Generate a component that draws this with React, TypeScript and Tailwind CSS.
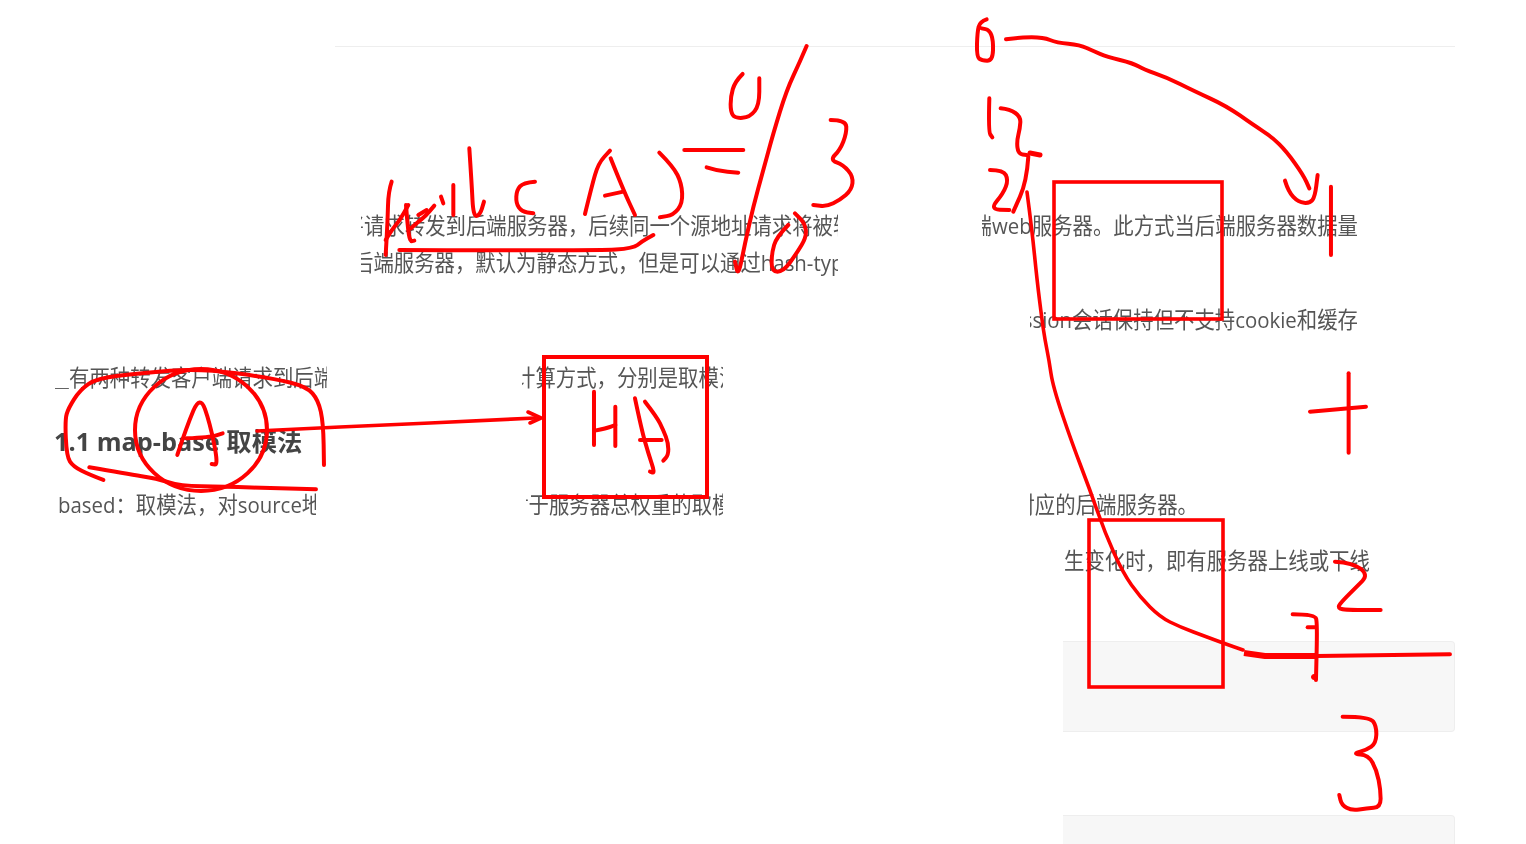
import React from 'react';

const font = { fontFamily: '"Open Sans", "Noto Sans CJK SC", sans-serif' };

// strokes in the 3x coordinates of each crop, origin given by the group
const heilStrokes = [
  'M50 125 L40 155 L38 240 L32 345',
  'M32 300 L50 270 L75 240 L100 195',
  'M93 195 L98 260 L105 305 L118 302',
  'M108 265 L130 245 L150 230 L178 197',
  'M130 225 L155 210',
  'M198 170 L205 190',
  'M235 135 L235 225',
  'M283 25 L290 130 L295 230 L315 225 L327 185',
];

const topLeft = [
  'M585 455 L550 458 L530 480 L528 520 L545 545 L580 550',
  'M735 552 L755 470 L775 400 L810 362',
  'M812 385 L850 480 L885 555',
  'M795 497 L850 485',
  'M958 368 L1000 410 L1025 460 L1028 520 L1000 555 L960 562',
  'M178 660 L775 662 L880 655 L905 635 L940 615',
  'M1033 360 L1210 360',
  'M1100 412 L1130 422 L1195 428',
  'M1208 132 L1185 155 L1172 200 L1172 245 L1185 265 L1230 262 L1258 225 L1258 145',
  'M1400 48 L1380 95 L1340 180 L1300 310 L1270 420 L1240 530 L1215 640 L1195 740 L1185 695',
  'M1472 270 L1518 270 L1520 310 L1500 360 L1470 390 L1510 405 L1540 440 L1535 480 L1500 510 L1460 530 L1420 525',
  'M1345 585 L1310 620 L1295 670 L1295 725 L1330 725 L1370 670 L1400 620 L1395 580 L1365 550',
];

const sixStroke = ['M50 28 L30 35 L22 65 L20 140 L35 152 L68 152 L70 90 L58 60 L35 55'];

const topRight = [
  'M138 118 L180 112 L250 112 L290 128 L360 135 L400 153 L440 170 L520 190 L550 208 L620 232 L700 272 L800 318 L880 375 L935 410 L980 455 L1030 525 L1048 565',
  'M975 542 L985 575 L1015 607 L1050 610 L1065 590 L1073 525',
  'M1113 560 L1113 765',
  'M88 295 L85 395 L97 412',
  'M122 325 L150 328 L182 350 L180 385 L170 425 L175 462 L200 465',
  'M205 470 L200 545 L160 635',
  'M90 510 L130 510 L145 540 L130 580 L90 628 L148 630',
];

const midLeft = [
  'M190 390 L150 375 L100 350 L80 320 L75 210 L85 175 L120 120 L170 85 L300 70 L480 55 L700 85 L800 110 L835 150 L850 220 L852 345',
  'M148 352 L260 372 L350 385 L420 408 L550 410 L720 415 L828 418',
  'M412 315 L440 230 L480 135 L510 220 L535 345 L515 342',
  'M440 265 L510 262 L548 250',
];

const midCenter = [
  'M282 155 L282 315',
  'M346 200 L346 318',
  'M285 272 L320 265 L346 255',
  'M405 175 L425 270 L445 340 L465 400 L450 395',
  'M435 185 L470 230 L490 270 L505 310 L505 345 L490 362',
  'M420 300 L485 300',
];

const lowRight = [
  'M848 763 L915 763 L922 790 L918 960',
  'M893 802 L915 802',
  'M920 888 L1320 883',
  'M975 605 L1030 608 L1075 645 L1040 680 L1000 720 L982 742 L1000 750 L1112 750',
  'M1016 40 L1016 278',
  'M900 155 L1068 140',
];

const bottomRight = [
  'M908 290 L990 290 L1010 320 L1008 370 L980 390 L937 402 L985 405 L1010 450 L1022 510 L1022 562 L980 565 L935 572 L905 555 L898 525',
];

// rounds the corners of a stroke so it reads as drawn by hand
function smooth(d: string) {
  const pts = d
    .replace('M', '')
    .split(' L')
    .map((p) => p.trim().split(' ').map(Number));
  if (pts.length < 3) return d;
  let out = `M${pts[0][0]} ${pts[0][1]}`;
  for (let i = 1; i < pts.length - 1; i++) {
    const mx = (pts[i][0] + pts[i + 1][0]) / 2;
    const my = (pts[i][1] + pts[i + 1][1]) / 2;
    out += ` Q${pts[i][0]} ${pts[i][1]} ${mx} ${my}`;
  }
  const last = pts[pts.length - 1];
  return `${out} L${last[0]} ${last[1]}`;
}

function Strokes({ x, y, paths }: { x: number; y: number; paths: string[] }) {
  return (
    <g transform={`translate(${x} ${y}) scale(0.3333)`} strokeWidth={12}>
      {paths.map((d) => (
        <path key={d} d={smooth(d)} />
      ))}
    </g>
  );
}

function Ink() {
  return (
    <svg
      className="absolute left-0 top-0"
      width={1526}
      height={844}
      viewBox="0 0 1526 844"
      fill="none"
      stroke="#ff0000"
      strokeLinecap="round"
      strokeLinejoin="round"
    >
      <Strokes x={375} y={140} paths={heilStrokes} />
      <Strokes x={340} y={30} paths={topLeft} />
      <Strokes x={970} y={10} paths={sixStroke} />
      <Strokes x={960} y={0} paths={topRight} />
      <Strokes x={40} y={350} paths={midLeft} />
      <Strokes x={500} y={340} paths={midCenter} />
      <Strokes x={1010} y={360} paths={lowRight} />
      <Strokes x={1040} y={620} paths={bottomRight} />

      <ellipse cx={201} cy={430} rx={66} ry={61} strokeWidth={4} />
      <rect x={1054} y={182} width={168} height={137} strokeWidth={3.6} strokeLinejoin="miter" />
      <rect x={1089} y={520} width={134} height={167} strokeWidth={3.6} strokeLinejoin="miter" />
      <rect x={544} y={357} width={163} height={140} strokeWidth={4} strokeLinejoin="miter" />

      {/* long curve from the 2 down to the thick stroke */}
      <path
        d={smooth(
          'M1027 192 L1032 230 L1037 280 L1042 320 L1045 340 L1049 360 L1053 387 L1072 443 L1090 490 L1105 533 L1123 573 L1140 597 L1160 617 L1180 627 L1207 637 L1223 643 L1243 650',
        )}
        strokeWidth={3.6}
      />
      <path d="M1244 653 L1265 656 L1316 656" strokeWidth={6} strokeLinecap="butt" />
      <circle cx={1314} cy={677} r={2.5} fill="#ff0000" strokeWidth={1} />
      <path d="M1030 153 L1040 155" strokeWidth={5} />

      {/* arrow */}
      <path d="M257 431 L340 427 L430 423 L535 418" strokeWidth={3.6} />
      <path d="M528 412 L541 418 L530 423" strokeWidth={3.6} />
    </svg>
  );
}

function Line({ className = '', children }: { className?: string; children: React.ReactNode }) {
  return (
    <div className={`flex h-9 items-center overflow-hidden whitespace-nowrap ${className}`}>
      <span className="origin-center scale-y-110">{children}</span>
    </div>
  );
}

export default function App() {
  return (
    <div
      className="relative flex h-[844px] w-[1526px] flex-col overflow-hidden bg-white pt-[46px] text-[20.4px] text-[#555555] blur-[0.35px]"
      style={font}
    >
      <div className="ml-[335px] h-px w-[1120px] shrink-0 bg-[#eeeeee]" />

      {/* upper text lines */}
      <div className="mt-[160px] flex shrink-0">
        <div className="ml-[361px] flex w-[477px] flex-col gap-px">
          <Line><span className="ml-[-17.4px]">将请求转发到后端服务器，后续同一个源地址请求将被转</span></Line>
          <Line><span className="ml-[-8px]">后端服务器，默认为静态方式，但是可以通过hash-type</span></Line>
        </div>
        <div className="ml-[144px] flex w-[376px] flex-col items-end gap-[58px]">
          <Line className="w-[376px] justify-end">后端web服务器。此方式当后端服务器数据量</Line>
          <Line className="w-[328px] justify-end">session会话保持但不支持cookie和缓存</Line>
        </div>
      </div>

      {/* middle columns */}
      <div className="mt-[22px] flex shrink-0">
        <div className="ml-[54px] flex w-[273px] flex-col">
          <Line className="ml-px"><span className="ml-[-6.4px]">＿有两种转发客户端请求到后端</span></Line>
          <div className="mt-[27px] flex h-10 w-[260px] items-center overflow-hidden whitespace-nowrap text-[25.3px] font-bold text-[#444444]">
            1.1 map-base 取模法
          </div>
          <Line className="ml-1 mt-[24px] w-[258px]">based：取模法，对source地址</Line>
        </div>
        <div className="ml-[195px] flex flex-col gap-[91px]">
          <Line className="w-[201px]"><span className="ml-[-7px]">计算方式，分别是取模法</span></Line>
          <Line className="ml-1 w-[197px]"><span className="ml-[-17.8px]">对于服务器总权重的取模</span></Line>
        </div>
        <div className="ml-[307px] flex flex-col gap-[20px] pt-[127px]">
          <Line className="w-[168px] justify-end">对应的后端服务器。</Line>
          <Line className="ml-[34px] w-[308px]">生变化时，即有服务器上线或下线，</Line>
        </div>
      </div>

      {/* gray code blocks */}
      <div className="ml-[1063px] mt-[63px] h-[91px] w-[392px] shrink-0 rounded-r border border-l-0 border-[#eeeeee] bg-[#f7f7f7]" />
      <div className="ml-[1063px] mt-[83px] h-[60px] w-[392px] shrink-0 rounded-r border border-l-0 border-[#eeeeee] bg-[#f7f7f7]" />

      <Ink />
    </div>
  );
}
